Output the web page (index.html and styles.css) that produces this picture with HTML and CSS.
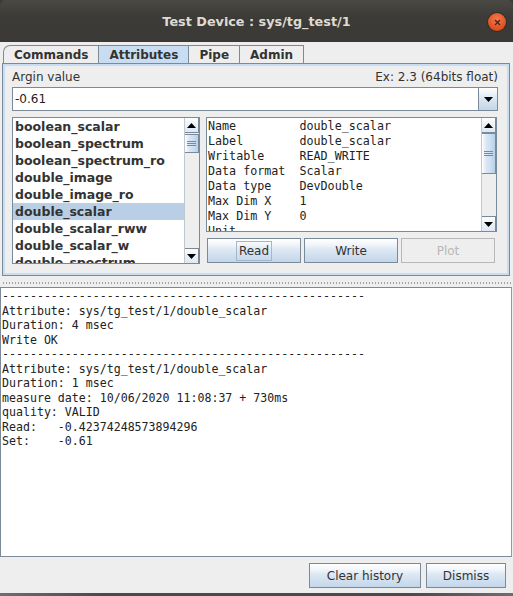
FILE: index.html
```html
<!DOCTYPE html>
<html lang="en">

<head>
    <meta charset="UTF-8">
    <meta name="viewport" content="width=device-width, initial-scale=1.0">
    <title>Test Device : sys/tg_test/1</title>
    <link rel="stylesheet" href="styles.css">
</head>

<body>
    <div class="window">
        <div class="titlebar">
            <span class="title">Test Device : sys/tg_test/1</span>
            <span class="close">
                <svg width="17" height="17" viewBox="0 0 17 17">
                    <path d="M6 6 L11 11 M11 6 L6 11" stroke="#3c2a22" stroke-width="1.3" fill="none" />
                </svg>
            </span>
        </div>

        <div class="content">
            <div class="tabs">
                <div class="tab first">Commands</div>
                <div class="tab active">Attributes</div>
                <div class="tab">Pipe</div>
                <div class="tab last">Admin</div>
            </div>

            <div class="tab-panel">
                <div class="argin-head">
                    <span>Argin value</span>
                    <span>Ex: 2.3 (64bits float)</span>
                </div>
                <div class="combo">
                    <div class="combo-text">-0.61</div>
                    <div class="combo-btn">
                        <svg width="9" height="5" viewBox="0 0 9 5"><path d="M0 0 H9 L4.5 5 Z" fill="#000" /></svg>
                    </div>
                </div>

                <div class="attr-row">
                    <div class="attr-list">
                        <div class="list-items">
                            <div class="item">boolean_scalar</div>
                            <div class="item">boolean_spectrum</div>
                            <div class="item">boolean_spectrum_ro</div>
                            <div class="item">double_image</div>
                            <div class="item">double_image_ro</div>
                            <div class="item selected">double_scalar</div>
                            <div class="item">double_scalar_rww</div>
                            <div class="item">double_scalar_w</div>
                            <div class="item">double_spectrum</div>
                        </div>
                        <div class="vscroll">
                            <div class="arrow up"><svg width="9" height="5" viewBox="0 0 9 5"><path d="M0 5 H9 L4.5 0 Z" fill="#000" /></svg></div>
                            <div class="track">
                                <div class="thumb list-thumb"><span class="grip"></span></div>
                            </div>
                            <div class="arrow down"><svg width="9" height="5" viewBox="0 0 9 5"><path d="M0 0 H9 L4.5 5 Z" fill="#000" /></svg></div>
                        </div>
                    </div>

                    <div class="attr-side">
                        <div class="info">
                            <div class="info-text">Name         double_scalar
Label        double_scalar
Writable     READ_WRITE
Data format  Scalar
Data type    DevDouble
Max Dim X    1
Max Dim Y    0
Unit</div>
                            <div class="vscroll">
                                <div class="arrow up"><svg width="9" height="5" viewBox="0 0 9 5"><path d="M0 5 H9 L4.5 0 Z" fill="#000" /></svg></div>
                                <div class="track">
                                    <div class="thumb info-thumb"><span class="grip"></span></div>
                                </div>
                                <div class="arrow down"><svg width="9" height="5" viewBox="0 0 9 5"><path d="M0 0 H9 L4.5 5 Z" fill="#000" /></svg></div>
                            </div>
                        </div>
                        <div class="actions">
                            <button class="btn"><span class="focus">Read</span></button>
                            <button class="btn">Write</button>
                            <button class="btn disabled">Plot</button>
                        </div>
                    </div>
                </div>
            </div>

            <div class="splitter"><div class="dots"></div></div>

            <div class="output">----------------------------------------------------
Attribute: sys/tg_test/1/double_scalar
Duration: 4 msec
Write OK
----------------------------------------------------
Attribute: sys/tg_test/1/double_scalar
Duration: 1 msec
measure date: 10/06/2020 11:08:37 + 730ms
quality: VALID
Read:   -0.42374248573894296
Set:    -0.61</div>

            <div class="footer">
                <button class="btn clear">Clear history</button>
                <button class="btn dismiss">Dismiss</button>
            </div>
        </div>
        <div class="bottom-edge"></div>
    </div>
</body>

</html>
```

FILE: styles.css
```css
* {
    margin: 0;
    padding: 0;
    box-sizing: border-box;
    font-family: "DejaVu Sans", sans-serif;
}

body {
    width: 513px;
    height: 596px;
    background: #3c3b37;
    overflow: hidden;
}

.window {
    width: 513px;
    height: 596px;
    display: flex;
    flex-direction: column;
}

/* title bar */

.titlebar {
    height: 42px;
    flex: none;
    display: flex;
    align-items: center;
    justify-content: center;
    position: relative;
    background: linear-gradient(#4a4944, #3c3b37 40%, #3a3935);
    border-radius: 6px 6px 0 0;
}

.title {
    color: #dfdbd2;
    font-weight: bold;
    font-size: 12.8px;
}

.close {
    position: absolute;
    left: 488px;
    top: 13px;
    width: 18px;
    height: 18px;
    border-radius: 50%;
    background: radial-gradient(circle at 50% 35%, #f47a4e, #df4d1c 70%, #c5421a);
    box-shadow: 0 0 0 1px #2f2e2a;
    display: flex;
    align-items: center;
    justify-content: center;
}

/* window content */

.content {
    flex: 1;
    background: #eeeeee;
    display: flex;
    flex-direction: column;
}

.tabs {
    display: flex;
    margin-top: 3px;
    padding-left: 3px;
    height: 18px;
}

.tab {
    padding: 0 10px;
    border-top: 1px solid #7a8a99;
    border-left: 1px solid #7a8a99;
    font-size: 12px;
    font-weight: bold;
    color: #333333;
    line-height: 18px;
    background: #eeeeee;
}

.tab.first {
    border-top-left-radius: 7px 7px;
}

.tab.last {
    border-right: 1px solid #7a8a99;
}

.tab.active {
    background: #c8ddf2;
}

.tab-panel {
    height: 213px;
    margin: 0 3px 0 2px;
    border: 1px solid #7a8a99;
    box-shadow: inset 0 0 0 2px #c8ddf2;
    padding: 7px 11px 11px 9px;
    display: flex;
    flex-direction: column;
}

.argin-head {
    display: flex;
    justify-content: space-between;
    font-size: 12px;
    line-height: 13px;
    color: #333333;
}

.combo {
    margin-top: 3px;
    height: 24px;
    display: flex;
    border: 1px solid #7a8a99;
    background: white;
}

.combo-text {
    flex: 1;
    font-size: 12px;
    line-height: 22px;
    padding-left: 2px;
    color: #222222;
}

.combo-btn {
    width: 19px;
    border-left: 1px solid #7a8a99;
    background: linear-gradient(#ffffff, #e8eff7 30%, #dde8f3 45%, #c3d6e9);
    display: flex;
    align-items: center;
    justify-content: center;
}

.attr-row {
    margin-top: 6px;
    height: 147px;
    display: flex;
    gap: 6px;
}

/* attribute list */

.attr-list {
    width: 188px;
    display: flex;
    border: 1px solid #7a8a99;
    background: white;
}

.list-items {
    flex: 1;
    overflow: hidden;
}

.item {
    height: 17px;
    line-height: 17px;
    padding-left: 2px;
    font-size: 12.5px;
    font-weight: bold;
    color: #333333;
    white-space: nowrap;
}

.item.selected {
    background: #b8cfe5;
}

/* scrollbars */

.vscroll {
    width: 15px;
    flex: none;
    display: flex;
    flex-direction: column;
    background: #eeeeee;
    border-left: 1px solid #c0c8d0;
}

.arrow {
    height: 15px;
    flex: none;
    display: flex;
    align-items: center;
    justify-content: center;
    background: linear-gradient(#ffffff, #eef3f8 40%, #dde8f3);
    border: 1px solid #7a8a99;
    border-left: none;
}

.arrow.up {
    border-top: none;
}

.arrow.down {
    border-bottom: none;
}

.track {
    flex: 1;
    position: relative;
}

.thumb {
    position: absolute;
    left: 0;
    right: 0;
    border: 1px solid #7a8a99;
    border-left: none;
    background: linear-gradient(90deg, #ffffff, #dde8f3 30%, #c8ddf2 70%, #b8cfe5);
    display: flex;
    align-items: center;
    justify-content: center;
}

.list-thumb {
    top: 1px;
    height: 19px;
}

.info-thumb {
    top: 0;
    height: 41px;
}

.grip {
    width: 9px;
    height: 5px;
    border-top: 1px solid #7a8a99;
    border-bottom: 1px solid #7a8a99;
    position: relative;
}

.grip::after {
    content: "";
    position: absolute;
    left: 0;
    right: 0;
    top: 1px;
    border-top: 1px solid #7a8a99;
}

/* info panel */

.attr-side {
    flex: 1;
    display: flex;
    flex-direction: column;
    gap: 6px;
}

.info {
    height: 115px;
    margin-right: 1px;
    display: flex;
    border: 1px solid #7a8a99;
    background: white;
}

.info-text {
    flex: 1;
    overflow: hidden;
    padding: 1px 0 0 1px;
    white-space: pre;
    font-family: "DejaVu Sans Mono", monospace;
    font-size: 11.7px;
    line-height: 15px;
    color: #222222;
}

.actions {
    display: grid;
    grid-template-columns: 94px 94px 94px;
    gap: 3px;
    padding-left: 1px;
}

.btn {
    height: 25px;
    border: 1px solid #7a8a99;
    background: linear-gradient(#ffffff, #f1f5fa 25%, #dde8f3 45%, #c3d6e9 100%);
    font-size: 12px;
    color: #333333;
    display: flex;
    align-items: center;
    justify-content: center;
}

.btn.disabled {
    border-color: #b8b8b8;
    background: #eeeeee;
    color: #b8b8b8;
}

.focus {
    font-family: inherit;
    border: 1px solid #a3b8cc;
    padding: 1px 2px;
    line-height: 16px;
}

/* split pane */

.splitter {
    height: 11px;
    flex: none;
    display: flex;
    align-items: center;
    padding: 0 2px;
}

.dots {
    flex: 1;
    height: 2px;
    margin-top: 2px;
    background-image: radial-gradient(circle, #9aa4ad 0.8px, transparent 0.9px);
    background-size: 3px 2px;
}

.output {
    height: 270px;
    flex: none;
    margin-right: 1px;
    border: 1px solid #7a8a99;
    border-right-color: #8f9aa5;
    background: white;
    padding: 1px 1px;
    white-space: pre;
    font-family: "DejaVu Sans Mono", monospace;
    font-size: 11.6px;
    line-height: 14.5px;
    color: #222222;
    overflow: hidden;
}

.footer {
    flex: 1;
    display: flex;
    justify-content: flex-end;
    gap: 5px;
    padding: 6px 7px 5px 0;
}

.clear {
    width: 112px;
}

.dismiss {
    width: 80px;
}

.bottom-edge {
    height: 3px;
    flex: none;
    background: linear-gradient(90deg, #6e6e6e, #4a4a4a 20%, #4a4a4a 80%, #6e6e6e);
}
```
